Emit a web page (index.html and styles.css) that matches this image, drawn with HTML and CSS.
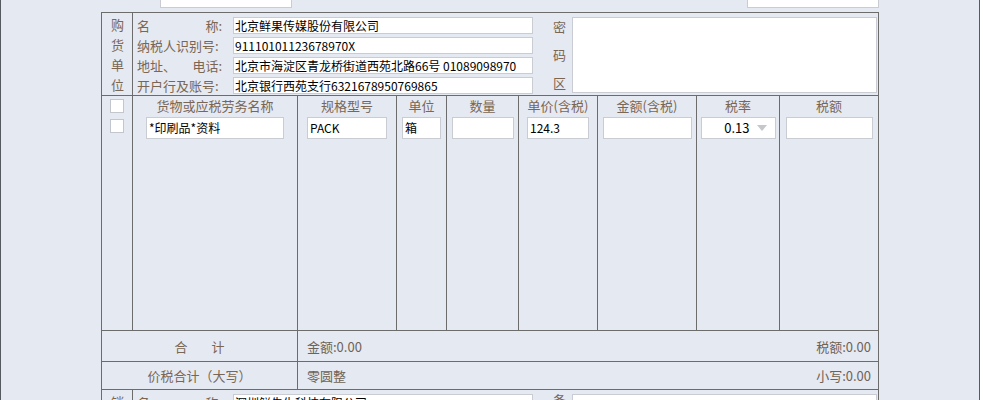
FILE: index.html
```html
<!DOCTYPE html>
<html lang="zh-CN">
<head>
<meta charset="utf-8">
<title>发票填开</title>
<link rel="stylesheet" href="styles.css">
</head>
<body>
<div class="page">
  <div class="top-bar">
    <div class="box top-left"></div>
    <div class="box top-right"></div>
  </div>

  <div class="invoice">
    <section class="party">
      <div class="side">购货单位</div>
      <div class="fields">
        <div class="row"><span class="label split"><span>名</span><span>称:</span></span><span class="field">北京鲜果传媒股份有限公司</span></div>
        <div class="row"><span class="label">纳税人识别号:</span><span class="field">91110101123678970X</span></div>
        <div class="row"><span class="label split"><span>地址、</span><span>电话:</span></span><span class="field">北京市海淀区青龙桥街道西苑北路66号 01089098970</span></div>
        <div class="row"><span class="label">开户行及账号:</span><span class="field">北京银行西苑支行6321678950769865</span></div>
      </div>
      <div class="pw-label"><span>密</span><span>码</span><span>区</span></div>
      <div class="pw-box"></div>
    </section>

    <section class="items">
      <div class="col c0">
        <span class="check"></span>
        <span class="check"></span>
      </div>
      <div class="col c1"><div class="th">货物或应税劳务名称</div><div class="cell w138">*印刷品*资料</div></div>
      <div class="col c2"><div class="th">规格型号</div><div class="cell w80">PACK</div></div>
      <div class="col c3"><div class="th">单位</div><div class="cell w39">箱</div></div>
      <div class="col c4"><div class="th">数量</div><div class="cell w62"></div></div>
      <div class="col c5"><div class="th">单价(含税)</div><div class="cell w62">124.3</div></div>
      <div class="col c6"><div class="th">金额(含税)</div><div class="cell w89"></div></div>
      <div class="col c7"><div class="th">税率</div><div class="cell select w75"><span>0.13</span><i class="arrow"></i></div></div>
      <div class="col c8"><div class="th">税额</div><div class="cell w87"></div></div>
    </section>

    <section class="sum-row total">
      <div class="sum-title">合<span class="gap"></span>计</div>
      <div class="sum-body"><span>金额:0.00</span><span>税额:0.00</span></div>
    </section>
    <section class="sum-row grand">
      <div class="sum-title">价税合计（大写）</div>
      <div class="sum-body"><span>零圆整</span><span>小写:0.00</span></div>
    </section>

    <section class="party seller">
      <div class="side">销货单位</div>
      <div class="fields">
        <div class="row"><span class="label split"><span>名</span><span>称:</span></span><span class="field">深圳鲜先生科技有限公司</span></div>
        <div class="row"><span class="label">纳税人识别号:</span><span class="field"></span></div>
      </div>
      <div class="pw-label"><span>备</span><span>注</span></div>
      <div class="pw-box"></div>
    </section>
  </div>
</div>
</body>
</html>
```

FILE: styles.css
```css
* { box-sizing: border-box; }

html, body {
  margin: 0;
  padding: 0;
  background: #ffffff;
  overflow: hidden;
}

body {
  font-family: "Noto Sans CJK SC", "Noto Sans", sans-serif;
  font-size: 13px;
  color: #7a6652;
}

.page {
  width: 980px;
  height: 400px;
  background: #e5e9f2;
  border-left: 1px solid #555a60;
  border-right: 1px solid #555a60;
  overflow: hidden;
}

.top-bar {
  display: flex;
  margin-top: -12px;
  height: 20px;
}

.box {
  background: #ffffff;
  border: 1px solid #c9ccd2;
  height: 20px;
  width: 132px;
}

.top-left { margin-left: 159px; }
.top-right { margin-left: 455px; }

.invoice {
  margin: 4px 0 0 100px;
  width: 778px;
  border: 1px solid #6c6c6c;
  border-bottom: none;
}

/* buyer / seller block */
.party {
  display: flex;
  height: 83px;
  border-bottom: 1px solid #6c6c6c;
}

.side {
  width: 31px;
  flex: none;
  border-right: 1px solid #6c6c6c;
  padding-top: 2px;
  line-height: 20px;
}

.side::before { content: none; }

.side {
  word-break: break-all;
  padding-left: 9px;
  padding-right: 8px;
}

.fields {
  width: 400px;
  flex: none;
  padding: 4px 0 0 4px;
}

.row {
  display: flex;
  height: 20px;
}

.label {
  width: 96px;
  flex: none;
  line-height: 17px;
  white-space: nowrap;
}

.label.split {
  display: flex;
  justify-content: space-between;
  padding-right: 11px;
}

.field {
  width: 300px;
  height: 17px;
  background: #ffffff;
  border: 1px solid #c9ccd2;
  color: #000000;
  font-size: 12px;
  line-height: 15px;
  padding-left: 1px;
  white-space: nowrap;
  overflow: hidden;
}

.pw-label {
  width: 39px;
  flex: none;
  display: flex;
  flex-direction: column;
  justify-content: space-between;
  align-items: flex-start;
  padding: 6px 0 5px 20px;
  line-height: 15px;
}

.pw-box {
  width: 305px;
  height: 76px;
  margin-top: 4px;
  background: #ffffff;
  border: 1px solid #c9ccd2;
}

/* items grid */
.items {
  display: flex;
  height: 235px;
  border-bottom: 1px solid #6c6c6c;
}

.col {
  display: flex;
  flex-direction: column;
  align-items: center;
  border-right: 1px solid #6c6c6c;
}

.c0 { width: 31px; padding-top: 3px; gap: 6px; }
.c1 { width: 165px; }
.c2 { width: 99px; }
.c3 { width: 50px; }
.c4 { width: 72px; }
.c5 { width: 79px; }
.c6 { width: 99px; }
.c7 { width: 83px; }
.c8 { width: 98px; border-right: none; }

.check {
  width: 14px;
  height: 14px;
  background: #ffffff;
  border: 1px solid #c3c6cc;
  margin-right: 1px;
}

.th {
  height: 20px;
  line-height: 20px;
  white-space: nowrap;
}

.cell {
  margin-top: 1px;
  height: 22px;
  background: #ffffff;
  border: 1px solid #c9ccd2;
  color: #000000;
  font-size: 12px;
  line-height: 20px;
  padding-left: 2px;
  white-space: nowrap;
}

.w138 { width: 138px; }
.w80 { width: 80px; }
.w39 { width: 39px; }
.w62 { width: 62px; }
.w89 { width: 89px; }
.w75 { width: 75px; }
.w87 { width: 87px; }

.select {
  display: flex;
  align-items: center;
  justify-content: flex-end;
  padding-right: 8px;
  font-size: 13px;
}

.arrow {
  width: 0;
  height: 0;
  margin-left: 7px;
  border-left: 5px solid transparent;
  border-right: 5px solid transparent;
  border-top: 6px solid #c4c7cc;
}

/* totals */
.sum-row {
  display: flex;
  border-bottom: 1px solid #6c6c6c;
}

.sum-row.total { height: 31px; }
.sum-row.grand { height: 28px; }

.sum-title {
  width: 196px;
  flex: none;
  border-right: 1px solid #6c6c6c;
  display: flex;
  align-items: center;
  justify-content: center;
}

.gap { display: inline-block; width: 24px; }

.sum-body {
  flex: 1;
  display: flex;
  align-items: center;
  justify-content: space-between;
  padding: 0 7px 0 9px;
  color: #6e6256;
}

.seller .pw-label { padding-top: 2px; }
```
